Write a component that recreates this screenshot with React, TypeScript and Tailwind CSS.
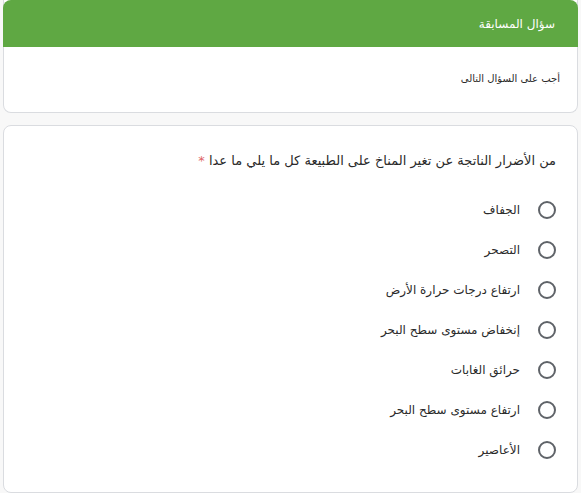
import React from "react";

const options = [
  "الجفاف",
  "التصحر",
  "ارتفاع درجات حرارة الأرض",
  "إنخفاض مستوى سطح البحر",
  "حرائق الغابات",
  "ارتفاع مستوى سطح البحر",
  "الأعاصير",
];

export default function App() {
  return (
    <div
      dir="rtl"
      className="w-[581px] h-[493px] overflow-hidden bg-[#f8f8f8] pl-[3px] pr-[3px] flex flex-col gap-[12px]"
      style={{ fontFamily: '"DejaVu Sans", sans-serif' }}
    >
      <div className="bg-white rounded-b-[8px] border border-t-0 border-[#dadce0] h-[113px] flex flex-col">
        <div className="bg-[#5fa843] h-[47px] rounded-t-[8px] -mx-px flex items-center pr-[23px] text-white text-[12px]">
          سؤال المسابقة
        </div>
        <div className="flex-1 flex items-center pr-[17px] text-[10px] text-[#2a2a2a] pt-[18px] pb-[20px]">
          أجب على السؤال التالى
        </div>
      </div>
      <div className="bg-white rounded-[8px] border border-[#dadce0] h-[368px] pt-[25px] pr-[21px]">
        <div className="text-[13px] text-[#2a2a2a] leading-[20px]">
          من الأضرار الناتجة عن تغير المناخ على الطبيعة كل ما يلي ما عدا{" "}
          <span className="text-[#e06666]">*</span>
        </div>
        <div className="mt-[28px] flex flex-col gap-[18px]">
          {options.map((o) => (
            <div key={o} className="flex items-center gap-[18px] h-[22px]">
              <div className="w-[18px] h-[18px] rounded-full border-2 border-[#5f6368] shrink-0" />
              <span className="text-[12px] text-[#2a2a2a]">{o}</span>
            </div>
          ))}
        </div>
      </div>
    </div>
  );
}
